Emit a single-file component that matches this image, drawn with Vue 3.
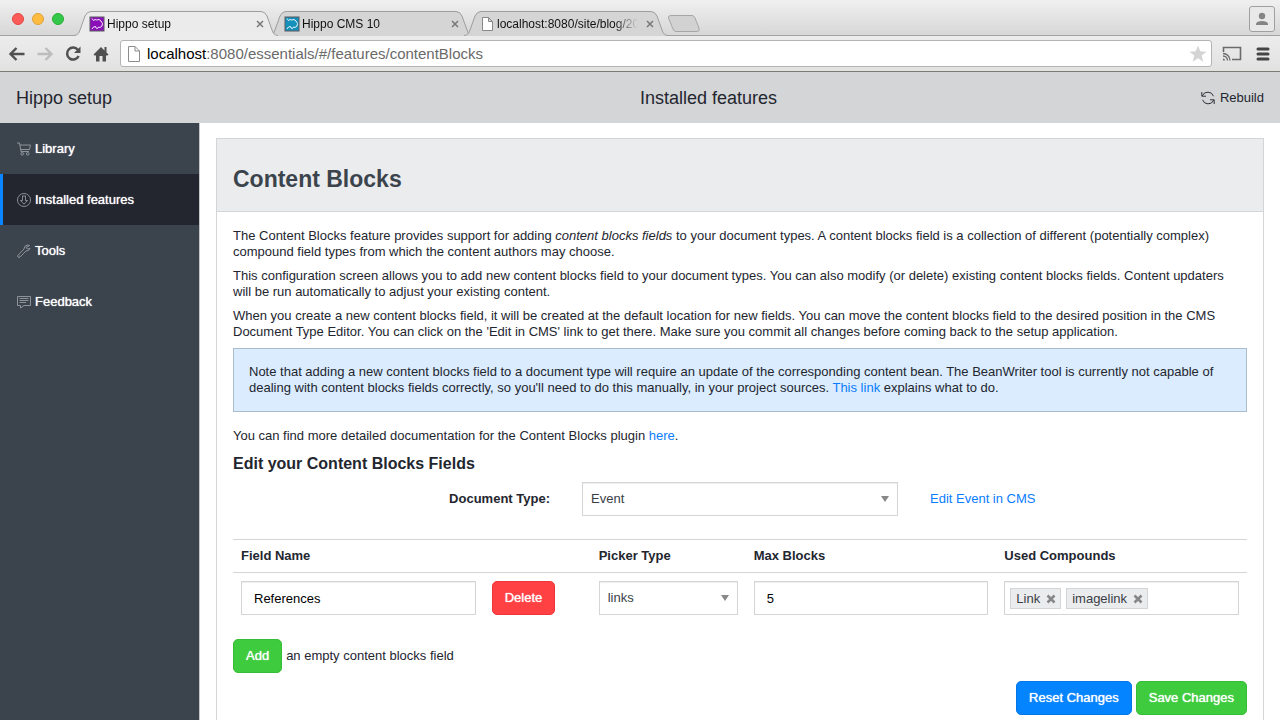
<script setup>
import { ref } from 'vue'

const tabs = [
  { title: 'Hippo setup', icon: 'hippo', color: '#8a0fb8', active: true },
  { title: 'Hippo CMS 10', icon: 'hippo', color: '#1590bb', active: false },
  { title: 'localhost:8080/site/blog/2014', icon: 'page', active: false },
]
const menu = [
  { label: 'Library', icon: 'cart' },
  { label: 'Installed features', icon: 'download', active: true },
  { label: 'Tools', icon: 'wrench' },
  { label: 'Feedback', icon: 'comment' },
]
const documentType = ref('Event')
const fieldName = ref('References')
const picker = ref('links')
const maxBlocks = ref('5')
const compounds = ref(['Link', 'imagelink'])
const remove = (name) => {
  compounds.value = compounds.value.filter((c) => c !== name)
}
</script>

<template>
  <div class="window">
    <header class="chrome">
      <div class="tabstrip">
        <div class="lights"><i class="red"></i><i class="amber"></i><i class="green"></i></div>
        <div class="tabs">
          <div v-for="tab in tabs" :key="tab.title" class="tab" :class="{ active: tab.active }">
            <svg class="tab-shape" viewBox="0 0 204 25" preserveAspectRatio="none" aria-hidden="true">
              <path class="tab-fill" d="M0 25C4 24 5 22 6 19L11 5Q13 .5 17 .5H187Q191 .5 193 5L198 19C199 22 200 24 204 25Z" />
              <path class="tab-line" d="M0 24.5C4 24 5 22 6 19L11 5Q13 .5 17 .5H187Q191 .5 193 5L198 19C199 22 200 24 204 24.5" />
            </svg>
            <svg v-if="tab.icon === 'hippo'" class="favicon" viewBox="0 0 16 16" aria-hidden="true">
              <rect x="1" y="1" width="14" height="14" :fill="tab.color" stroke="#5a5a62" />
              <path d="M3 2.500 4.500 4.500 6 3.500 7.500 4 10 3.500 12 5 13.500 7.500 13 10 11 11.500 9.500 11 8.500 12.500 7 12 6.500 10.500 4.500 11 3 13" fill="none" stroke="#fff" stroke-width=".9" />
            </svg>
            <svg v-else class="favicon" viewBox="0 0 16 16" aria-hidden="true">
              <path d="M3.500 1.500H9.500L13.500 5.500V14.500H3.500ZM9.500 1.500V5.500H13.500" fill="#fff" stroke="#888" />
            </svg>
            <span class="tab-title">{{ tab.title }}</span>
            <button class="tab-close" :aria-label="'Close ' + tab.title">
              <svg viewBox="0 0 8 8"><path d="M1 1 7 7M7 1 1 7" stroke="#777" stroke-width="1.500" /></svg>
            </button>
          </div>
          <button class="new-tab" aria-label="New tab">
            <svg viewBox="0 0 34 17"><path d="M4 .5H25Q27 .5 28 3L32 13Q33 16.500 30 16.500H9Q7 16.500 6 14L1.500 3Q1 .5 4 .5Z" fill="#d2d2d2" stroke="#a6a6a6" /></svg>
          </button>
        </div>
        <button class="profile" aria-label="Profile">
          <svg viewBox="0 0 26 26"><rect x=".5" y=".5" width="25" height="25" rx="2.500" fill="#e9e9e9" stroke="#a0a0a0" /><circle cx="13" cy="10" r="3.200" fill="#858585" /><path d="M7 19V17.500Q8 15 13 15T19 17.500V19Z" fill="#858585" /></svg>
        </button>
      </div>
      <div class="toolbar">
        <button aria-label="Back"><svg viewBox="0 0 18 18"><path d="M16.500 9H3M8.500 3 2.500 9 8.500 15" fill="none" stroke="#505050" stroke-width="2.400" /></svg></button>
        <button aria-label="Forward"><svg viewBox="0 0 18 18"><path d="M1.500 9H15M9.500 3 15.500 9 9.500 15" fill="none" stroke="#bdbdbd" stroke-width="2.400" /></svg></button>
        <button aria-label="Reload"><svg viewBox="0 0 18 18"><path d="M13.800 4.800A6 6 0 1 0 14.600 11" fill="none" stroke="#505050" stroke-width="2.500" /><path d="M16.500 1.500V8H10Z" fill="#505050" /></svg></button>
        <button aria-label="Home"><svg viewBox="0 0 18 18"><path d="M9 2 1.500 9.500 2.500 10.500H4V16.500H7.500V11H10.500V16.500H14V10.500H15.500L16.500 9.500 14.500 7.500V2H12.500V5.500Z" fill="#505050" /></svg></button>
        <div class="address">
          <svg class="page-icon" viewBox="0 0 16 18" aria-hidden="true"><path d="M2.500 1.500H9L13.500 6V16.500H2.500ZM9 1.500V6H13.500" fill="#fff" stroke="#8d8d8d" /></svg>
          <span class="url"><b>localhost</b>:8080/essentials/#/features/contentBlocks</span>
          <button class="star" aria-label="Bookmark"><svg viewBox="0 0 18 18"><path d="M9 .5 11.300 6.300 17.500 6.700 12.700 10.600 14.300 16.700 9 13.300 3.700 16.700 5.300 10.600 .5 6.700 6.700 6.300Z" fill="#d4d4d4" /></svg></button>
        </div>
        <button class="cast" aria-label="Cast"><svg viewBox="0 0 20 16"><path d="M1.500 6V1.500H18.500V13.500H10" fill="none" stroke="#6b6b6b" stroke-width="1.600" /><path d="M1 7.500A7 7 0 0 1 8 14.500M1 10A4.500 4.500 0 0 1 5.500 14.500" fill="none" stroke="#6b6b6b" stroke-width="1.300" /><path d="M1 12.500A2 2 0 0 1 3 14.500H1Z" fill="#6b6b6b" /></svg></button>
        <button class="burger" aria-label="Menu"><svg viewBox="0 0 14 14"><path d="M2 2H12M2 7H12M2 12H12" stroke="#444" stroke-width="3" stroke-linecap="round" /></svg></button>
      </div>
    </header>

    <div class="appbar">
      <span>Hippo setup</span>
      <div class="appbar-right">
        <span>Installed features</span>
        <button class="rebuild">
          <svg viewBox="0 0 14 14" fill="none" stroke="#2b2f38" aria-hidden="true"><path d="M.8 1V5.200H5M1.300 4.800A6 6 0 0 1 12.500 5.200M13.200 13V8.800H9M12.700 9.200A6 6 0 0 1 1.500 8.800" /></svg>
          Rebuild
        </button>
      </div>
    </div>

    <div class="body">
      <nav class="sidebar">
        <a v-for="item in menu" :key="item.label" href="#" class="nav-item" :class="{ current: item.active }">
          <svg viewBox="0 0 14 14" fill="none" aria-hidden="true">
            <path v-if="item.icon === 'cart'" d="M0 1H2.500L4 9.500H12M3 3H13.500L12.500 7.500H3.700M6.500 11.800A1.300 1.300 0 1 1 3.900 11.800A1.300 1.300 0 1 1 6.500 11.800M12 11.800A1.300 1.300 0 1 1 9.400 11.800A1.300 1.300 0 1 1 12 11.800" />
            <path v-else-if="item.icon === 'download'" d="M13.500 7A6.500 6.500 0 1 1 .5 7A6.500 6.500 0 1 1 13.500 7M5.500 3H8.500V7.500H10.500L7 11.200 3.500 7.500H5.500Z" />
            <path v-else-if="item.icon === 'wrench'" d="M12.500 1.500 10 1Q7 2 7 5L1 11.200Q.2 12.200 1 13Q2 13.800 3 13L9 7Q12 7.200 13 4.500L10.500 5 9 3.500ZM2 11.900H2.500" />
            <path v-else d="M.5 1.500H13.500V10.500H7L3.500 13V10.500H.5ZM2.500 3.500H11.500M2.500 5.500H11.500M2.500 7.500H9" />
          </svg>
          {{ item.label }}
        </a>
      </nav>

      <main class="main">
        <section class="panel">
          <div class="panel-head"><h1>Content Blocks</h1></div>
          <div class="panel-body">
            <p>The Content Blocks feature provides support for adding <em>content blocks fields</em> to your document types. A content blocks field is a collection of different (potentially complex) compound field types from which the content authors may choose.</p>
            <p>This configuration screen allows you to add new content blocks field to your document types. You can also modify (or delete) existing content blocks fields. Content updaters will be run automatically to adjust your existing content.</p>
            <p>When you create a new content blocks field, it will be created at the default location for new fields. You can move the content blocks field to the desired position in the CMS Document Type Editor. You can click on the 'Edit in CMS' link to get there. Make sure you commit all changes before coming back to the setup application.</p>
            <div class="note">Note that adding a new content blocks field to a document type will require an update of the corresponding content bean. The BeanWriter tool is currently not capable of dealing with content blocks fields correctly, so you'll need to do this manually, in your project sources. <a href="#">This link</a> explains what to do.</div>
            <p>You can find more detailed documentation for the Content Blocks plugin <a href="#">here</a>.</p>
            <h2>Edit your Content Blocks Fields</h2>

            <div class="type-row">
              <label for="doctype">Document Type:</label>
              <span class="select">
                <select id="doctype" v-model="documentType"><option>Event</option><option>News</option></select>
              </span>
              <a href="#">Edit Event in CMS</a>
            </div>

            <table>
              <colgroup><col /><col class="c-delete" /><col class="c-picker" /><col /><col /></colgroup>
              <thead>
                <tr><th colspan="2">Field Name</th><th>Picker Type</th><th>Max Blocks</th><th>Used Compounds</th></tr>
              </thead>
              <tbody>
                <tr>
                  <td><input v-model="fieldName" type="text" aria-label="Field Name" /></td>
                  <td><button class="btn danger">Delete</button></td>
                  <td><span class="select"><select v-model="picker" aria-label="Picker Type"><option>links</option><option>dropdown</option></select></span></td>
                  <td><input v-model="maxBlocks" type="text" aria-label="Max Blocks" /></td>
                  <td>
                    <div class="tags">
                      <span v-for="name in compounds" :key="name" class="tag">{{ name }}
                        <button :aria-label="'Remove ' + name" @click="remove(name)"><svg viewBox="0 0 10 10"><path d="M1.500 1.500 8.500 8.500M8.500 1.500 1.500 8.500" stroke="#868686" stroke-width="2.500" /></svg></button>
                      </span>
                    </div>
                  </td>
                </tr>
              </tbody>
            </table>

            <div class="add-row"><button class="btn success">Add</button><span>an empty content blocks field</span></div>
            <div class="actions"><button class="btn primary">Reset Changes</button><button class="btn success">Save Changes</button></div>
          </div>
        </section>
      </main>
    </div>
  </div>
</template>

<style>
body {
  background: #fff;
  overflow: hidden;
}
</style>

<style scoped>
.window {
  display: flex;
  flex-direction: column;
  height: 100vh;
  overflow: hidden;
  font: 13px/16px "Liberation Sans", Arial, sans-serif;
  color: #23262f;
}
.window * { box-sizing: border-box; }
button {
  font: inherit;
  color: inherit;
  padding: 0;
  border: 0;
  background: none;
}
svg { display: block; flex: none; }
a { color: #0a7cff; text-decoration: none; }

.chrome { flex: none; background: #e6e6e6; border-bottom: 1px solid #797c75; }
.tabstrip {
  display: flex;
  height: 36px;
  background: linear-gradient(#f0f0f0, #d6d6d6);
  box-shadow: inset 0 -1px #a2a2a2;
}
.lights { display: flex; gap: 8px; padding: 13px 0 0 12px; width: 74px; flex: none; }
.lights i { width: 12px; height: 12px; border-radius: 50%; }
.red { background: #fc5b57; border: 1px solid #e24640; }
.amber { background: #fdbc40; border: 1px solid #dfa236; }
.green { background: #34c84a; border: 1px solid #28ad35; }
.tabs { display: flex; flex: 1; align-items: flex-end; min-width: 0; }
.tab {
  position: relative;
  display: flex;
  align-items: center;
  width: 204px;
  height: 25px;
  margin-right: -9px;
  padding: 0 14px 0 15px;
}
.tab.active { z-index: 1; }
.tab-shape { position: absolute; inset: 0; width: 100%; height: 100%; }
.tab-fill { fill: #d5d5d5; }
.active .tab-fill { fill: #ebebeb; }
.tab-line { fill: none; stroke: #9d9d9d; }
.favicon { position: relative; width: 16px; height: 16px; margin-right: 2px; }
.tab-title {
  position: relative;
  flex: 1;
  min-width: 0;
  overflow: hidden;
  white-space: nowrap;
  font-size: 12px;
  color: #111;
  mask-image: linear-gradient(to right, #000 calc(100% - 24px), transparent);
}
.tab-close { position: relative; margin-left: 8px; }
.tab-close svg { width: 8px; height: 8px; }
.new-tab { align-self: center; margin: 10px 0 0 8px; }
.new-tab svg { width: 34px; height: 17px; }
.profile { margin: 6px 5px 0 0; align-self: flex-start; }
.profile svg { width: 26px; height: 26px; }
.toolbar {
  display: flex;
  align-items: center;
  gap: 10px;
  height: 35px;
  padding: 0 10px 0 8px;
  background: linear-gradient(#ececec, #e2e2e2);
}
.toolbar > button svg { width: 18px; height: 18px; }
.address {
  flex: 1;
  display: flex;
  align-items: center;
  height: 27px;
  padding: 0 4px 0 5px;
  background: #fff;
  border: 1px solid #b3b3b3;
  border-radius: 3px;
}
.page-icon { width: 16px; height: 18px; margin-right: 5px; }
.url { flex: 1; font-size: 15px; line-height: 20px; color: #6a6a6a; white-space: nowrap; }
.url b { font-weight: normal; color: #000; }
.star svg { width: 18px; height: 18px; }
.toolbar > .cast svg { width: 20px; height: 16px; }
.toolbar > .burger { margin-left: 4px; }
.toolbar > .burger svg { width: 14px; height: 14px; }

.appbar {
  flex: none;
  display: grid;
  grid-template-columns: 1fr 1fr;
  align-items: center;
  height: 51px;
  padding: 0 16px;
  background: #d4d5d7;
  font-size: 18px;
  line-height: 24px;
}
.appbar-right { display: flex; align-items: center; justify-content: space-between; }
.rebuild { display: flex; align-items: center; gap: 5px; font-size: 13px; }
.rebuild svg { width: 14px; height: 14px; }

.body { flex: 1; display: flex; min-height: 0; }
.sidebar { width: 200px; flex: none; background: #3b444c; border-right: 1px solid #c5c7ca; }
.nav-item {
  display: flex;
  align-items: center;
  gap: 4px;
  height: 51px;
  padding-left: 14px;
  border-left: 3px solid transparent;
  color: #fff;
  text-shadow: 0 0 1px #fff;
}
.nav-item svg { width: 14px; height: 14px; stroke: #a2a7ac; stroke-width: .8; }
.current { background: #23262f; border-left-color: #0a84ff; }

.main { flex: 1; min-width: 0; padding: 15px 16px 0; }
.panel { height: 100%; border: 1px solid #d4d5d7; border-bottom: 0; }
.panel-head { background: #ebecee; border-bottom: 1px solid #d4d5d7; padding: 24px 16px 16px; }
h1 { margin: 0; font-size: 23px; line-height: 32px; font-weight: bold; color: #3b444c; }
.panel-body { padding: 16px; }
p { margin: 0 0 8px; padding-right: 4px; }
.note {
  margin-bottom: 16px;
  padding: 15px;
  background: #daecfe;
  border: 1px solid #a9bccf;
}
h2 { margin: 0 0 6px; font-size: 16px; line-height: 24px; font-weight: bold; }
.type-row {
  display: grid;
  grid-template-columns: 317px 316px auto;
  gap: 32px;
  align-items: center;
  margin-bottom: 23px;
}
.type-row label { text-align: right; font-weight: bold; }
.select { position: relative; display: block; }
.select::after {
  content: "";
  position: absolute;
  right: 9px;
  top: 14px;
  border: 4px solid transparent;
  border-top: 6px solid #888;
  border-bottom: 0;
  pointer-events: none;
}
select, input, .tags {
  display: block;
  width: 100%;
  height: 34px;
  margin: 0;
  border: 1px solid #d4d5d7;
  border-radius: 0;
  background: #fff;
  box-shadow: inset 0 1px 1px #eee;
  font: inherit;
}
select { appearance: none; padding: 0 8px; color: #3a3e47; }
input { padding: 0 12px; color: #000; }
table { width: 100%; border-collapse: collapse; table-layout: fixed; border-top: 1px solid #d4d5d7; }
.c-delete { width: 107px; }
.c-picker { width: 155px; }
th { padding: 8px; text-align: left; border-bottom: 1px solid #d4d5d7; }
td { padding: 8px; }
.tags { display: flex; gap: 5px; padding: 6px 5px; }
.tag {
  display: flex;
  align-items: center;
  gap: 6px;
  height: 21px;
  padding: 0 4px 0 5px;
  background: #ebecee;
  border: 1px solid #d4d5d7;
  color: #3a3e47;
}
.tag svg { width: 10px; height: 10px; }
.btn {
  height: 34px;
  padding: 0 12px;
  border: 1px solid;
  border-radius: 5px;
  color: #fff;
  text-shadow: 0 0 1px #fff;
  white-space: nowrap;
}
.danger { background: #ff4143; border-color: #f03538; }
.success { background: #3ecc3e; border-color: #35bd35; }
.primary { background: #0584ff; border-color: #0477e8; }
.add-row { display: flex; align-items: center; gap: 4px; margin: 16px 0 8px; }
.actions { display: flex; justify-content: flex-end; gap: 4px; }
</style>
